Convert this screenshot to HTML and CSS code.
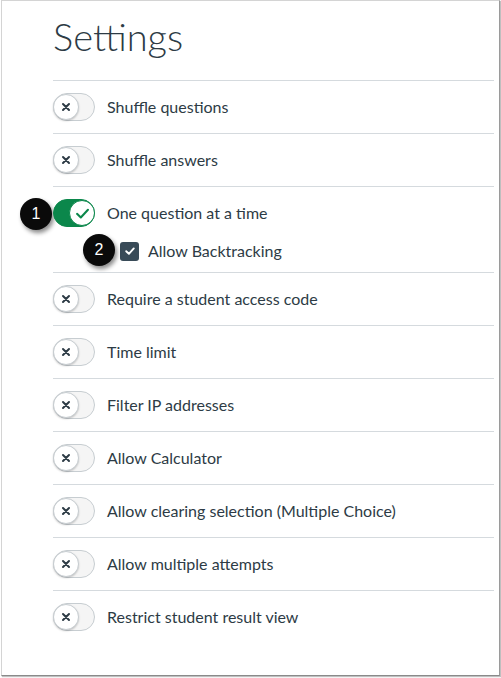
FILE: index.html
```html
<!DOCTYPE html>
<html>
<head>
<meta charset="utf-8">
<link rel="stylesheet" href="styles.css">
</head>
<body>
<div class="frame">
  <h1 class="title">Settings</h1>
  <ul class="list">
    <li class="row">
      <span class="toggle"><span class="knob"><svg viewBox="0 0 10 10" class="x"><path d="M2 2L8 8M8 2L2 8"/></svg></span></span>
      <span class="label">Shuffle questions</span>
    </li>
    <li class="row">
      <span class="toggle"><span class="knob"><svg viewBox="0 0 10 10" class="x"><path d="M2 2L8 8M8 2L2 8"/></svg></span></span>
      <span class="label">Shuffle answers</span>
    </li>
    <li class="group">
      <div class="row inner">
        <span class="badge badge-1">1</span>
        <span class="toggle on"><span class="knob"><svg viewBox="0 0 14 14" class="check"><path d="M2.5 7.3L5.6 10.3L11.5 3.9"/></svg></span></span>
        <span class="label">One question at a time</span>
      </div>
      <div class="subrow">
        <span class="badge badge-2">2</span>
        <span class="checkbox"><svg viewBox="0 0 14 14"><path d="M3.2 7.2L5.9 9.8L10.8 4.4"/></svg></span>
        <span class="label">Allow Backtracking</span>
      </div>
    </li>
    <li class="row">
      <span class="toggle"><span class="knob"><svg viewBox="0 0 10 10" class="x"><path d="M2 2L8 8M8 2L2 8"/></svg></span></span>
      <span class="label">Require a student access code</span>
    </li>
    <li class="row">
      <span class="toggle"><span class="knob"><svg viewBox="0 0 10 10" class="x"><path d="M2 2L8 8M8 2L2 8"/></svg></span></span>
      <span class="label">Time limit</span>
    </li>
    <li class="row">
      <span class="toggle"><span class="knob"><svg viewBox="0 0 10 10" class="x"><path d="M2 2L8 8M8 2L2 8"/></svg></span></span>
      <span class="label">Filter IP addresses</span>
    </li>
    <li class="row">
      <span class="toggle"><span class="knob"><svg viewBox="0 0 10 10" class="x"><path d="M2 2L8 8M8 2L2 8"/></svg></span></span>
      <span class="label">Allow Calculator</span>
    </li>
    <li class="row">
      <span class="toggle"><span class="knob"><svg viewBox="0 0 10 10" class="x"><path d="M2 2L8 8M8 2L2 8"/></svg></span></span>
      <span class="label">Allow clearing selection (Multiple Choice)</span>
    </li>
    <li class="row">
      <span class="toggle"><span class="knob"><svg viewBox="0 0 10 10" class="x"><path d="M2 2L8 8M8 2L2 8"/></svg></span></span>
      <span class="label">Allow multiple attempts</span>
    </li>
    <li class="row">
      <span class="toggle"><span class="knob"><svg viewBox="0 0 10 10" class="x"><path d="M2 2L8 8M8 2L2 8"/></svg></span></span>
      <span class="label">Restrict student result view</span>
    </li>
  </ul>
</div>
</body>
</html>
```

FILE: styles.css
```css
html, body {
  margin: 0;
  padding: 0;
  background: #ffffff;
}
body {
  width: 501px;
  height: 678px;
  overflow: hidden;
  font-family: Lato, "Liberation Sans", sans-serif;
  color: #2d3b45;
}
.frame {
  box-sizing: border-box;
  margin-left: 1px;
  width: 499px;
  height: 676px;
  border: 1px solid #d4d4d4;
  border-right-color: #9a9a9a;
  border-bottom-color: #8a8a8a;
  box-shadow: 1px 1px 1px rgba(0,0,0,0.25);
  padding: 0 5px 0 51px;
  background: #fff;
}
.title {
  margin: 0;
  padding-top: 13px;
  height: 79px;
  box-sizing: border-box;
  font-weight: 300;
  font-size: 38px;
  line-height: 44px;
  color: #2d3b45;
  letter-spacing: 0;
}
.list {
  list-style: none;
  margin: 0;
  padding: 0;
}
.row, .group {
  border-top: 1px solid #d5dade;
}
.row {
  display: flex;
  align-items: center;
  height: 52px;
  position: relative;
}
.group .inner {
  border-top: none;
}
.label {
  font-size: 16px;
  line-height: 20px;
  margin-left: 12px;
  color: #2d3b45;
}
.toggle {
  position: relative;
  box-sizing: border-box;
  width: 42px;
  height: 28px;
  border-radius: 14px;
  background: #f5f5f5;
  border: 1px solid #c7cdd1;
  display: flex;
  align-items: center;
  flex-shrink: 0;
}
.knob {
  box-sizing: border-box;
  width: 26px;
  height: 26px;
  border-radius: 50%;
  background: #fff;
  border: 1px solid #c7cdd1;
  box-shadow: 0 1px 2px rgba(0,0,0,0.2);
  margin-left: -1px;
  display: flex;
  align-items: center;
  justify-content: center;
}
.x {
  width: 10px;
  height: 10px;
  fill: none;
  stroke: #2d3b45;
  stroke-width: 2;
  stroke-linecap: round;
}
.toggle.on {
  background: #0b874b;
  border-color: #0b874b;
  justify-content: flex-end;
}
.toggle.on .knob {
  margin-left: 0;
  margin-right: -1px;
  border-color: #0b874b;
  box-shadow: none;
}
.check {
  width: 17px;
  height: 17px;
  fill: none;
  stroke: #0b874b;
  stroke-width: 1.7;
  stroke-linecap: round;
  stroke-linejoin: round;
}
.subrow {
  display: flex;
  align-items: center;
  padding: 2px 0 11px 67px;
  position: relative;
}
.subrow .label {
  margin-left: 9px;
}
.checkbox {
  box-sizing: border-box;
  width: 19px;
  height: 19px;
  border-radius: 3px;
  background: #394b58;
  display: flex;
  align-items: center;
  justify-content: center;
}
.checkbox svg {
  width: 14px;
  height: 14px;
  fill: none;
  stroke: #fff;
  stroke-width: 1.9;
  stroke-linecap: round;
  stroke-linejoin: round;
}
.badge {
  position: absolute;
  width: 32px;
  height: 32px;
  border-radius: 50%;
  background: #0a0a0a;
  color: #fff;
  font-family: "Liberation Sans", Arial, sans-serif;
  font-size: 16px;
  line-height: 32px;
  text-align: center;
  box-shadow: 2px 3px 4px rgba(0,0,0,0.45);
}
.badge-1 {
  left: -33px;
  top: 11px;
}
.badge-2 {
  left: 30px;
  top: -5px;
}
```
